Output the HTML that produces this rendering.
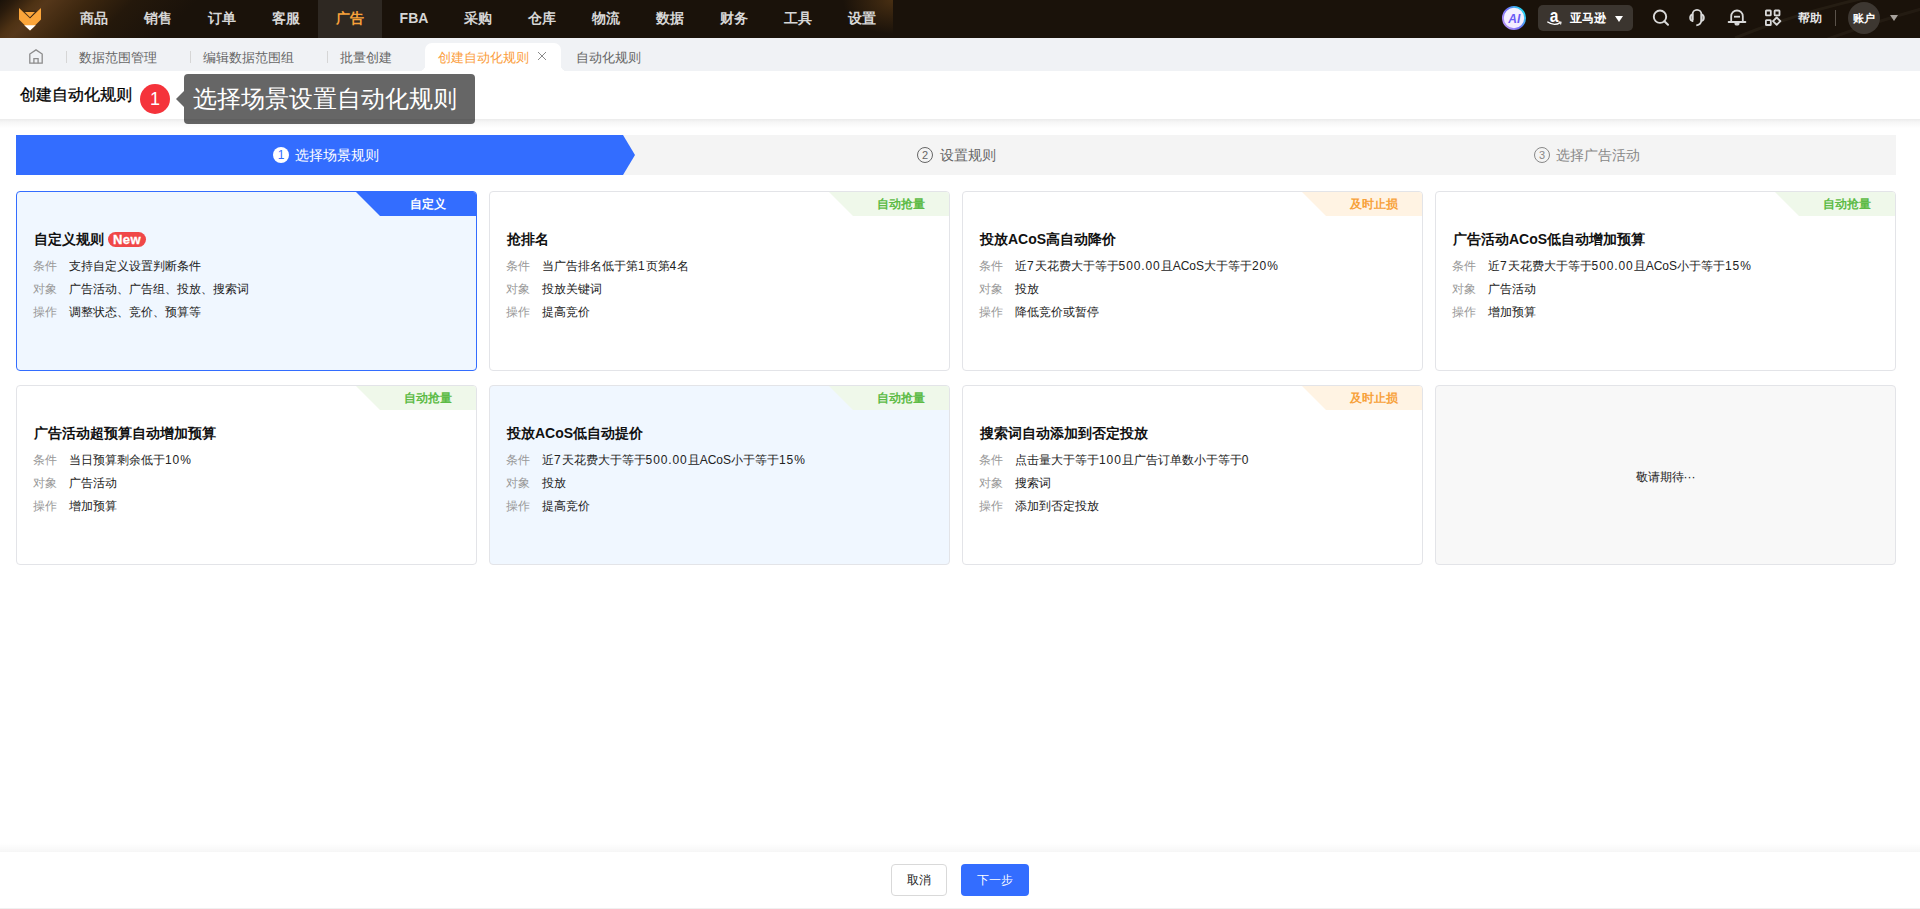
<!DOCTYPE html>
<html><head><meta charset="utf-8">
<style>
*{box-sizing:border-box;margin:0;padding:0}
html,body{width:1920px;height:909px;overflow:hidden;background:#fff;font-family:"Liberation Sans",sans-serif;color:#222}
.abs{position:absolute}
#nav{position:absolute;left:0;top:0;width:1920px;height:38px;background:#1a120a;overflow:hidden}
#nav .glow{position:absolute;left:0;top:0;width:300px;height:38px;background:linear-gradient(135deg,#1a1209 0px,#2a1b0c 10px,#4e3214 26px,#55371a 34px,#3d270f 62px,#24180b 95px,#1a120a 140px)}
#nav .menu{position:absolute;left:62px;top:0;width:831px;height:38px}
#nav .mi{position:absolute;top:0;width:64px;height:38px;line-height:36px;text-align:center;font-size:14px;font-weight:bold;color:#d6d6d6}
#nav .mi.on{background:#2e2822;color:#f7a13a}
#tabs{position:absolute;left:0;top:38px;width:1920px;height:33px;background:#f0f2f5}
.tab{position:absolute;top:3px;height:33px;line-height:33px;font-size:13px;color:#666}
.sep{position:absolute;top:13px;width:1px;height:12px;background:#d6d6d6}
#hdr{position:absolute;left:0;top:71px;width:1920px;height:48px;background:#fff}
#hsh{position:absolute;left:0;top:119px;width:1920px;height:9px;background:linear-gradient(#ebebeb,#f6f6f6 35%,#fff)}
.steps{position:absolute;left:16px;top:135px;width:1880px;height:40px;background:#f4f4f4}
.card{position:absolute;width:461px;height:180px;border:1px solid #e3e4e8;border-radius:4px;background:#fff;overflow:hidden}
.card.sel{border-color:#336dff;background:#f0f7ff}
.card.hov{background:#f0f7ff}
.tag{position:absolute;right:0;top:0;width:120px;height:24px;font-size:12px;font-weight:bold;line-height:24px;text-align:center;padding-left:24px;clip-path:polygon(0 0,100% 0,100% 100%,24px 100%)}
.tag.blue{background:#336dff;color:#fff}
.tag.green{background:#eff8ea;color:#5dbb46}
.tag.orange{background:#fff3e3;color:#f7a13a}
.ttl{position:absolute;left:17px;top:36px;font-size:14px;font-weight:bold;line-height:22px;color:#111;white-space:nowrap}
.row{position:absolute;left:16px;font-size:12px;line-height:20px;white-space:nowrap;color:#222}
.row b{font-weight:normal;color:#999;display:inline-block;width:36px}
.n{letter-spacing:0.9px}
.new{display:inline-block;vertical-align:top;margin-top:4px;margin-left:4px;height:15px;width:38px;border-radius:8px;background:#f04848;color:#fff;font-size:13px;letter-spacing:0.4px;font-weight:bold;line-height:15px;text-align:center;-webkit-text-stroke:0.3px #fff}
</style></head><body>

<div id="nav">
  <div class="glow"></div>
  <svg class="abs" style="left:0;top:0" width="64" height="38" viewBox="0 0 64 38">
    <polygon points="19,8 30,18.6 41,8 41,19.6 30,30.4 19,19.6" fill="#fba53a"/>
    <polygon points="24.8,11.9 35.2,11.9 30,17.3" fill="#fba53a"/>
    <polyline points="23.6,11.2 36.4,11.2 30,17.9" fill="none" stroke="#3b2710" stroke-width="0.9"/>
    <polygon points="24.2,25.2 35.8,25.2 30,30.4" fill="#fff"/>
  </svg>
  <svg class="abs" style="left:1640px;top:0" width="280" height="38" viewBox="0 0 280 38"><path d="M95 38 Q160 12 225 -2" fill="none" stroke="rgba(255,235,200,0.05)" stroke-width="3"/><path d="M185 40 Q240 20 285 8" fill="none" stroke="rgba(255,235,200,0.045)" stroke-width="3"/></svg>
  <div class="abs" style="left:840px;top:0;width:53px;height:38px;background:radial-gradient(ellipse 50px 34px at 100% 0,rgba(110,70,25,0.55),rgba(110,70,25,0) 100%)"></div>
  <div class="menu">
    <div class="mi" style="left:0">商品</div>
    <div class="mi" style="left:64px">销售</div>
    <div class="mi" style="left:128px">订单</div>
    <div class="mi" style="left:192px">客服</div>
    <div class="mi on" style="left:256px">广告</div>
    <div class="mi" style="left:320px">FBA</div>
    <div class="mi" style="left:384px">采购</div>
    <div class="mi" style="left:448px">仓库</div>
    <div class="mi" style="left:512px">物流</div>
    <div class="mi" style="left:576px">数据</div>
    <div class="mi" style="left:640px">财务</div>
    <div class="mi" style="left:704px">工具</div>
    <div class="mi" style="left:768px">设置</div>
  </div>

  <svg class="abs" style="left:1502px;top:6px" width="24" height="24" viewBox="0 0 24 24">
    <defs><linearGradient id="aig" x1="0" y1="1" x2="1" y2="0.3"><stop offset="0" stop-color="#c9a0f7"/><stop offset="0.55" stop-color="#6d6cf6"/><stop offset="1" stop-color="#25d5f5"/></linearGradient>
    <linearGradient id="aif" x1="0" y1="0" x2="0" y2="1"><stop offset="0" stop-color="#f4f2ff"/><stop offset="1" stop-color="#f3ebff"/></linearGradient></defs>
    <circle cx="12" cy="12" r="11.1" fill="url(#aif)" stroke="url(#aig)" stroke-width="1.8"/>
    <text x="12.3" y="16.8" text-anchor="middle" font-family="Liberation Sans" font-weight="bold" font-style="italic" font-size="12" fill="#6a5cf5">AI</text>
  </svg>
  <div class="abs" style="left:1538px;top:5px;width:95px;height:26px;border-radius:5px;background:#3b352f"></div>
  <svg class="abs" style="left:1545px;top:8px" width="18" height="18" viewBox="0 0 18 18">
    <text x="0" y="0" transform="translate(9.2 13.6) scale(0.82 1)" text-anchor="middle" font-family="Liberation Sans" font-weight="bold" font-size="19" fill="#fff">a</text>
    <path d="M2.3 13.8 Q9 18.6 15.3 14.6" fill="none" stroke="#fff" stroke-width="1.3"/>
    <path d="M13.6 13.7 L16 14.2 L15.6 16.5" fill="none" stroke="#fff" stroke-width="1.1"/>
  </svg>
  <div class="abs" style="left:1570px;top:5px;font-size:12px;line-height:26px;font-weight:bold;color:#fff">亚马逊</div>
  <svg class="abs" style="left:1614px;top:15px" width="10" height="8"><polygon points="1,1 9,1 5,7" fill="#fff"/></svg>
  <svg class="abs" style="left:1652px;top:9px" width="18" height="18" viewBox="0 0 18 18"><circle cx="8" cy="7.7" r="6.2" fill="none" stroke="#d9d9d9" stroke-width="1.9"/><path d="M12.4 12.2 L16 15.8" stroke="#d9d9d9" stroke-width="2" stroke-linecap="round"/></svg>
  <svg class="abs" style="left:1687px;top:7px" width="20" height="20" viewBox="0 0 20 20"><path d="M5.6 13 V7.3 A4.4 4.4 0 0 1 14.4 7.3 V13 Q14.4 17.6 9.3 18.3" fill="none" stroke="#d9d9d9" stroke-width="1.8"/><path d="M5.6 7.3 A3.6 3.6 0 0 0 5.6 14.2 Z" fill="#8f8a84" stroke="#d9d9d9" stroke-width="1.6" stroke-linejoin="round"/><path d="M14.4 7.3 A3.6 3.6 0 0 1 14.4 14.2 Z" fill="#8f8a84" stroke="#d9d9d9" stroke-width="1.6" stroke-linejoin="round"/></svg>
  <svg class="abs" style="left:1727px;top:8px" width="20" height="20" viewBox="0 0 20 20"><path d="M4.2 14 V8.3 A5.8 5.8 0 0 1 15.8 8.3 V14" fill="none" stroke="#d9d9d9" stroke-width="1.8"/><path d="M1.6 14 H18.4" stroke="#d9d9d9" stroke-width="1.8" stroke-linecap="round"/><path d="M7 8.7 H13" stroke="#d9d9d9" stroke-width="1.8"/><path d="M8.1 15 A1.9 1.9 0 0 0 11.9 15" fill="#d9d9d9" stroke="#d9d9d9" stroke-width="1.4"/></svg>
  <svg class="abs" style="left:1763px;top:8px" width="20" height="20" viewBox="0 0 20 20"><rect x="2.9" y="2.5" width="4.9" height="4.9" rx="0.6" fill="none" stroke="#d9d9d9" stroke-width="1.8"/><rect x="11.6" y="2.5" width="4.9" height="4.9" rx="0.6" fill="none" stroke="#d9d9d9" stroke-width="1.8"/><rect x="2.9" y="12.1" width="4.9" height="4.9" rx="0.6" fill="none" stroke="#d9d9d9" stroke-width="1.8"/><path d="M13.7 9.5 L17.4 13.2 L13.7 16.9 L10 13.2 Z" fill="none" stroke="#d9d9d9" stroke-width="1.8" stroke-linejoin="round"/></svg>
  <div class="abs" style="left:1798px;top:0;font-size:12px;line-height:36px;font-weight:bold;color:#e6e6e6">帮助</div>
  <div class="abs" style="left:1835px;top:10px;width:1px;height:16px;background:#5a524a"></div>
  <div class="abs" style="left:1848px;top:2px;width:32px;height:32px;border-radius:50%;background:#3d3731"></div>
  <div class="abs" style="left:1852px;top:2px;width:24px;font-size:11px;line-height:32px;font-weight:bold;color:#fff;text-align:center">账户</div>
  <svg class="abs" style="left:1889px;top:14px" width="10" height="8"><polygon points="1,1 9,1 5,7" fill="#a7a29c"/></svg>
</div>

<div id="tabs">
  <svg class="abs" style="left:29px;top:11px" width="15" height="15" viewBox="0 0 15 15"><path d="M0.8 14.2 V5 L7 0.9 L13.2 5 V14.2 Z" fill="none" stroke="#8c8c8c" stroke-width="1.3" stroke-linejoin="miter"/><path d="M4.9 14.2 V9.6 H9.1 V14.2" fill="none" stroke="#8c8c8c" stroke-width="1.3"/></svg>
  <div class="sep" style="left:66px"></div>
  <div class="tab" style="left:79px">数据范围管理</div>
  <div class="sep" style="left:190px"></div>
  <div class="tab" style="left:203px">编辑数据范围组</div>
  <div class="sep" style="left:327px"></div>
  <div class="tab" style="left:340px">批量创建</div>
  <div class="abs" style="left:425px;top:5px;width:136px;height:28px;background:#fff;border-radius:7px 7px 0 0"></div>
  <div class="abs" style="left:419px;top:27px;width:6px;height:6px;background:radial-gradient(circle at 0 0,#f0f2f5 6px,#fff 6.5px)"></div>
  <div class="abs" style="left:561px;top:27px;width:6px;height:6px;background:radial-gradient(circle at 100% 0,#f0f2f5 6px,#fff 6.5px)"></div>
  <div class="tab" style="left:438px;color:#fb9d3b">创建自动化规则</div>
  <svg class="abs" style="left:537px;top:13px" width="10" height="10" viewBox="0 0 10 10"><path d="M1 1 L9 9 M9 1 L1 9" stroke="#8a8a8a" stroke-width="1"/></svg>
  <div class="tab" style="left:576px">自动化规则</div>
</div>

<div id="hsh"></div>
<div id="hdr">
  <div class="abs" style="left:20px;top:13px;font-size:16px;line-height:22px;color:#000;-webkit-text-stroke:0.3px #000">创建自动化规则</div>
  <div class="abs" style="left:140px;top:13px;width:30px;height:30px;border-radius:50%;background:#f5333b;color:#fff;font-size:18px;line-height:30px;text-align:center">1</div>
</div>
<div class="abs" style="left:176px;top:91px;width:0;height:0;border-top:8px solid transparent;border-bottom:8px solid transparent;border-right:8px solid rgba(0,0,0,0.6)"></div>
<div class="abs" style="left:184px;top:74px;width:291px;height:50px;background:rgba(0,0,0,0.6);border-radius:4px;color:#fff;font-size:24px;line-height:50px;padding-left:9px;white-space:nowrap">选择场景设置自动化规则</div>


<div class="steps"></div>
<svg class="abs" style="left:16px;top:135px" width="620" height="40"><polygon points="0,0 607,0 619,20 607,40 0,40" fill="#336dff"/></svg>
<div class="abs" style="left:273px;top:147px;width:16px;height:16px;border-radius:50%;background:#fff;color:#336dff;font-size:12px;line-height:16px;text-align:center">1</div>
<div class="abs" style="left:295px;top:144px;font-size:14px;line-height:22px;color:#fff">选择场景规则</div>
<div class="abs" style="left:917px;top:147px;width:16px;height:16px;border-radius:50%;border:1px solid #666;color:#666;font-size:11px;line-height:14px;text-align:center">2</div>
<div class="abs" style="left:940px;top:144px;font-size:14px;line-height:22px;color:#666">设置规则</div>
<div class="abs" style="left:1534px;top:147px;width:16px;height:16px;border-radius:50%;border:1px solid #888;color:#888;font-size:11px;line-height:14px;text-align:center">3</div>
<div class="abs" style="left:1556px;top:144px;font-size:14px;line-height:22px;color:#888">选择广告活动</div>


<div class="card sel" style="left:16px;top:191px"><div class="tag blue">自定义</div><div class="ttl">自定义规则<span class="new">New</span></div><div class="row" style="top:64px"><b>条件</b>支持自定义设置判断条件</div><div class="row" style="top:87px"><b>对象</b>广告活动、广告组、投放、搜索词</div><div class="row" style="top:110px"><b>操作</b>调整状态、竞价、预算等</div></div>
<div class="card " style="left:489px;top:191px"><div class="tag green">自动抢量</div><div class="ttl">抢排名</div><div class="row" style="top:64px"><b>条件</b>当广告排名低于第<span class="n">1</span>页第<span class="n">4</span>名</div><div class="row" style="top:87px"><b>对象</b>投放关键词</div><div class="row" style="top:110px"><b>操作</b>提高竞价</div></div>
<div class="card " style="left:962px;top:191px"><div class="tag orange">及时止损</div><div class="ttl">投放ACoS高自动降价</div><div class="row" style="top:64px"><b>条件</b>近<span class="n">7</span>天花费大于等于<span class="n">500.00</span>且ACoS大于等于<span class="n">20%</span></div><div class="row" style="top:87px"><b>对象</b>投放</div><div class="row" style="top:110px"><b>操作</b>降低竞价或暂停</div></div>
<div class="card " style="left:1435px;top:191px"><div class="tag green">自动抢量</div><div class="ttl">广告活动ACoS低自动增加预算</div><div class="row" style="top:64px"><b>条件</b>近<span class="n">7</span>天花费大于等于<span class="n">500.00</span>且ACoS小于等于<span class="n">15%</span></div><div class="row" style="top:87px"><b>对象</b>广告活动</div><div class="row" style="top:110px"><b>操作</b>增加预算</div></div>
<div class="card " style="left:16px;top:385px"><div class="tag green">自动抢量</div><div class="ttl">广告活动超预算自动增加预算</div><div class="row" style="top:64px"><b>条件</b>当日预算剩余低于<span class="n">10%</span></div><div class="row" style="top:87px"><b>对象</b>广告活动</div><div class="row" style="top:110px"><b>操作</b>增加预算</div></div>
<div class="card hov" style="left:489px;top:385px"><div class="tag green">自动抢量</div><div class="ttl">投放ACoS低自动提价</div><div class="row" style="top:64px"><b>条件</b>近<span class="n">7</span>天花费大于等于<span class="n">500.00</span>且ACoS小于等于<span class="n">15%</span></div><div class="row" style="top:87px"><b>对象</b>投放</div><div class="row" style="top:110px"><b>操作</b>提高竞价</div></div>
<div class="card " style="left:962px;top:385px"><div class="tag orange">及时止损</div><div class="ttl">搜索词自动添加到否定投放</div><div class="row" style="top:64px"><b>条件</b>点击量大于等于<span class="n">100</span>且广告订单数小于等于<span class="n">0</span></div><div class="row" style="top:87px"><b>对象</b>搜索词</div><div class="row" style="top:110px"><b>操作</b>添加到否定投放</div></div>
<div class="card" style="left:1435px;top:385px;background:#f8f8f8;font-size:12px;line-height:182px;text-align:center;color:#222">敬请期待···</div>
<div class="abs" style="left:0;top:843px;width:1920px;height:9px;background:linear-gradient(rgba(0,0,0,0),rgba(0,0,0,0.035))"></div>
<div class="abs" style="left:0;top:852px;width:1920px;height:57px;background:#fff"></div>
<div class="abs" style="left:0;top:908px;width:1920px;height:1px;background:#f0f0f0"></div>
<div class="abs" style="left:891px;top:864px;width:56px;height:32px;border:1px solid #d9d9d9;border-radius:4px;background:#fff;font-size:12px;line-height:30px;text-align:center;color:#222">取消</div>
<div class="abs" style="left:961px;top:864px;width:68px;height:32px;border-radius:4px;background:#336dff;font-size:12px;line-height:32px;text-align:center;color:#fff;font-weight:500">下一步</div>
</body></html>
